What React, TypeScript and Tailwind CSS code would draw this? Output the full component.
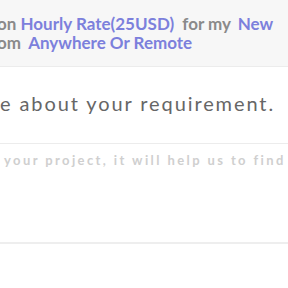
export default function App() {
  return (
    <div className="w-[288px] h-[288px] overflow-hidden bg-white font-['Lato',sans-serif]">
      <div className="h-[67px] bg-[#f7f7f7] border-b border-[#ececec] pt-[14px] text-[17px] leading-[19px] font-bold text-[#8a8a8a] whitespace-nowrap">
        <div className="-ml-[3px]">
          on <span className="text-[#7c80dc]">Hourly Rate(25USD)</span>{" "}
          <span className="ml-[4px]">for my</span>{" "}
          <span className="text-[#7c80dc] ml-[3px]">New</span>
        </div>
        <div className="-ml-[3px]">
          om <span className="text-[#7c80dc] ml-[3px]">Anywhere Or Remote</span>
        </div>
      </div>
      <div className="h-[77px] border-b border-[#ececec] pt-[24px] whitespace-nowrap">
        <p className="text-[20px] leading-[24px] tracking-[1.9px] text-[#666]">
          e about your requirement.
        </p>
      </div>
      <div className="h-[100px] border-b-2 border-[#eeeeee] pt-[6px] whitespace-nowrap">
        <p className="pl-[4px] text-[13px] leading-[20px] font-bold tracking-[2.4px] text-[#cfcfcf]">
          your project, it will help us to find
        </p>
      </div>
    </div>
  );
}
